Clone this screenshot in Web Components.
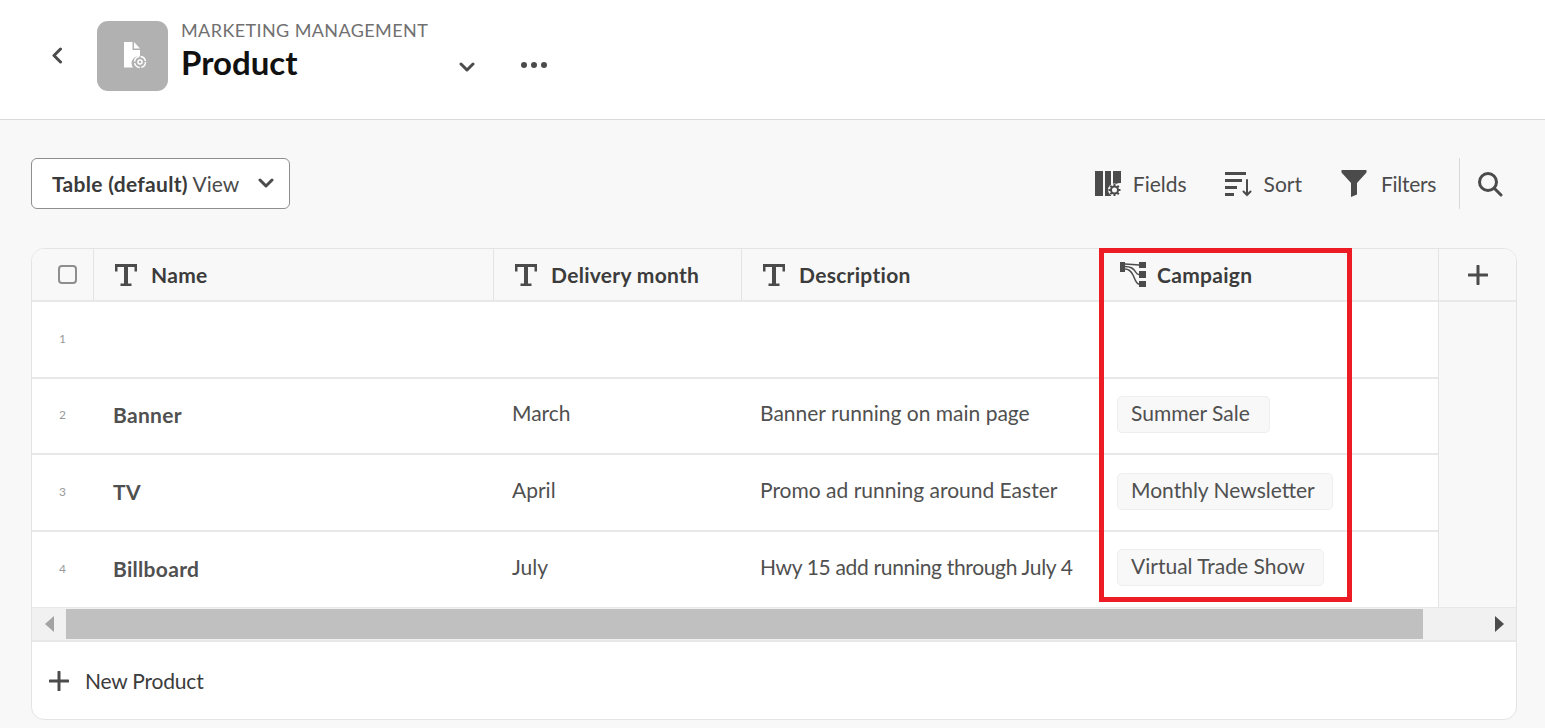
<!DOCTYPE html>
<html>
<head>
<meta charset="utf-8">
<style>
    html, body { margin: 0; height: 728px; overflow: hidden; }
    body { background: #f8f8f8; font-family: Lato, "Open Sans", sans-serif; color: #4b4b4b; }
</style>
</head>
<body>
<app-header></app-header>
<view-toolbar></view-toolbar>
<data-table>
    <table-row num="1"></table-row>
    <table-row num="2" name="Banner" month="March" desc="Banner running on main page" tag="Summer Sale" tag-width="153"></table-row>
    <table-row num="3" name="TV" month="April" desc="Promo ad running around Easter" tag="Monthly Newsletter" tag-width="216"></table-row>
    <table-row num="4" name="Billboard" month="July" desc="Hwy 15 add running through July 4" desc-spacing="-.33px" tag="Virtual Trade Show" tag-width="207"></table-row>
</data-table>

<script>
const ICONS = {
    chevron: `<svg width="16" height="11" viewBox="0 0 16 11"><path d="M2 2l6 6 6-6" fill="none" stroke="currentColor" stroke-width="3" stroke-linecap="round" stroke-linejoin="round"/></svg>`,
    type: `<svg width="24" height="24" viewBox="0 0 24 24" fill="#4b4b4b"><path d="M1 1h22v7.500h-2.500V4h-6.500v16.500h3.500V23H6.500v-2.500H10V4H3.500v4.500H1z"/></svg>`,
    plus: `<svg width="20" height="20" viewBox="0 0 20 20"><path d="M10 1v18M1 10h18" stroke="#4b4b4b" stroke-width="3" stroke-linecap="round"/></svg>`
}

const headerTemplate = document.createElement("template")
headerTemplate.innerHTML = `
    <style>
        :host { display: flex; height: 119px; background: #fff; border-bottom: 1px solid #d9d9d9; align-items: flex-start; box-sizing: content-box; color: #4b4b4b; }
        .back { margin: 47px 0 0 51px; width: 12px; height: 17px; }
        .tile { margin: 21px 0 0 34px; width: 71px; height: 70px; border-radius: 11px; background: #b1b1b1; display: flex; align-items: center; justify-content: center; }
        .titles { margin: 18px 0 0 13px; width: 278px; }
        .eyebrow { font-size: 18px; line-height: 24px; color: #707070; white-space: nowrap; letter-spacing: .4px; }
        .title { font-size: 33px; line-height: 42px; font-weight: 700; color: #111; margin-top: -1px; }
        .chevron { margin: 57px 0 0 0; height: 12px; }
        .more { margin: 62px 0 0 46px; display: flex; gap: 4px; }
        .more i { width: 6px; height: 6px; border-radius: 50%; background: #4b4b4b; }
    </style>
    <svg class="back" viewBox="0 0 12 17"><path d="M9.500 2L3 8.500 9.500 15" fill="none" stroke="currentColor" stroke-width="3" stroke-linecap="round" stroke-linejoin="round"/></svg>
    <div class="tile">
        <svg width="24" height="28" viewBox="0 0 24 28" style="margin: 0 0 2px 4px">
            <path d="M1 1h8.500v8H17v6.500a7 7 0 0 0-7 11H1z M11 1l6 6.500h-6z" fill="#fff"/>
            <circle cx="17" cy="21" r="5.500" fill="none" stroke="#fff" stroke-width="1.500" stroke-dasharray="7 1.600"/>
            <circle cx="17" cy="21" r="2" fill="none" stroke="#fff" stroke-width="1.500"/>
        </svg>
    </div>
    <div class="titles">
        <div class="eyebrow">MARKETING MANAGEMENT</div>
        <div class="title">Product</div>
    </div>
    <div class="chevron">${ICONS.chevron}</div>
    <div class="more"><i></i><i></i><i></i></div>
`

class AppHeader extends HTMLElement {
    constructor() {
        super()
        this.attachShadow({ mode: "open" }).append(headerTemplate.content.cloneNode(true))
    }
}
customElements.define("app-header", AppHeader)

const toolbarTemplate = document.createElement("template")
toolbarTemplate.innerHTML = `
    <style>
        :host { display: flex; align-items: flex-start; height: 128px; padding: 38px 0 0 31px; box-sizing: border-box; font-size: 21px; color: #4b4b4b; }
        .select { width: 259px; height: 51px; box-sizing: border-box; background: #fff; border: 1px solid #8e8e8e; border-radius: 6px; display: flex; align-items: center; padding: 0 15px 0 20px; justify-content: space-between; }
        .select b { font-weight: 700; color: #3a3a3a; letter-spacing: .3px; }
        .select span { white-space: nowrap; }
        .actions { margin-left: auto; display: flex; align-items: center; height: 51px; }
        .action { display: flex; align-items: center; gap: 11px; }
        .fields { margin-right: 38px; }
        .sort { margin-right: 39px; gap: 12px; }
        .filters { margin-right: 23px; gap: 14px; letter-spacing: -.3px; }
        .divider { width: 1px; height: 51px; background: #d9d9d9; }
        .search { margin: 0 42px 0 17px; height: 26px; }
    </style>
    <div class="select"><span><b>Table (default)</b> View</span>${ICONS.chevron}</div>
    <div class="actions">
        <div class="action fields">
            <svg width="27" height="27" viewBox="0 0 27 27" fill="#4b4b4b">
                <path d="M0 1h8v25H0zM10 1h6v25h-6zM18 1h8v12a8 8 0 0 0-8 5z"/>
                <circle cx="19.500" cy="20" r="6.500" fill="#f8f8f8"/>
                <circle cx="19.500" cy="20" r="3.500" fill="none" stroke="#4b4b4b" stroke-width="2"/>
                <path d="M19.500 14v2.500M19.500 23.500V26M13.500 20H16M23 20h2.500M15.300 15.800l1.800 1.800M22 22.500l1.800 1.800M15.300 24.200l1.800-1.800M22 17.500l1.800-1.800" stroke="#4b4b4b" stroke-width="2"/>
            </svg>
            <span>Fields</span>
        </div>
        <div class="action sort">
            <svg width="27" height="26" viewBox="0 0 27 26" fill="#4b4b4b">
                <path d="M0 1h21v3H0zM0 8h17v3H0zM0 15h12v3H0zM0 22h9v3H0z"/>
                <path d="M22 9v15M18.500 20.500L22 24l3.500-3.500" fill="none" stroke="#4b4b4b" stroke-width="2" stroke-linecap="round"/>
            </svg>
            <span>Sort</span>
        </div>
        <div class="action filters">
            <svg width="26" height="27" viewBox="0 0 26 27" fill="#4b4b4b"><path d="M0.500 0h25v2.500L16 13v11.500L10 27V13L0.500 2.500z"/></svg>
            <span>Filters</span>
        </div>
        <div class="divider"></div>
        <svg class="search" width="26" height="26" viewBox="0 0 26 26"><circle cx="11" cy="11" r="8.500" fill="none" stroke="#4b4b4b" stroke-width="3"/><path d="M17.500 17.500l6.500 6.500" stroke="#4b4b4b" stroke-width="3" stroke-linecap="round"/></svg>
    </div>
`

class ViewToolbar extends HTMLElement {
    constructor() {
        super()
        this.attachShadow({ mode: "open" }).append(toolbarTemplate.content.cloneNode(true))
    }
}
customElements.define("view-toolbar", ViewToolbar)

const rowTemplate = document.createElement("template")
rowTemplate.innerHTML = `
    <style>
        :host { display: grid; grid-template-columns: 62px 400px 248px 362px 335px; height: 76.67px; box-sizing: border-box; border-bottom: 2px solid #e8e8e8; font-size: 21px; color: #505050; background: #fff; }
        :host(:last-child) { border-bottom-color: transparent; }
        div { display: flex; align-items: center; min-width: 0; white-space: nowrap; padding-bottom: 6px; }
        .num { justify-content: center; font-size: 12px; color: #9a9a9a; padding: 0 1px 2px 0; }
        .name { padding-left: 19px; font-weight: 700; letter-spacing: .3px; padding-bottom: 2px; }
        .cell { padding-left: 18px; }
        .camp { padding-left: 13px; padding-bottom: 3px; }
        .tag { box-sizing: border-box; height: 37px; background: #f8f8f8; border: 1px solid #eee; border-radius: 5px; padding: 0 0 4px 13px; }
    </style>
    <div class="num"></div>
    <div class="name"></div>
    <div class="cell month"></div>
    <div class="cell desc"></div>
    <div class="camp"></div>
`

class TableRow extends HTMLElement {
    constructor() {
        super()
        this.attachShadow({ mode: "open" }).append(rowTemplate.content.cloneNode(true))
    }

    connectedCallback() {
        const shadow = this.shadowRoot
        shadow.querySelector(".num").textContent = this.getAttribute("num")
        shadow.querySelector(".name").textContent = this.getAttribute("name") || ""
        shadow.querySelector(".month").textContent = this.getAttribute("month") || ""
        const desc = shadow.querySelector(".desc")
        desc.textContent = this.getAttribute("desc") || ""
        if (this.hasAttribute("desc-spacing")) {
            desc.style.letterSpacing = this.getAttribute("desc-spacing")
        }
        if (this.hasAttribute("tag")) {
            const tag = document.createElement("div")
            tag.className = "tag"
            tag.style.width = this.getAttribute("tag-width") + "px"
            tag.textContent = this.getAttribute("tag")
            shadow.querySelector(".camp").append(tag)
        }
    }
}
customElements.define("table-row", TableRow)

const tableTemplate = document.createElement("template")
tableTemplate.innerHTML = `
    <style>
        :host { display: block; position: relative; margin-left: 31px; width: 1486px; height: 472px; box-sizing: border-box; border: 1px solid #e4e4e4; border-radius: 13px; background: #fff; color: #3c3c3c; }
        .frame { height: 100%; border-radius: 12px; overflow: hidden; display: flex; flex-direction: column; }
        .head { display: grid; grid-template-columns: 62px 400px 248px 362px 335px 1fr; height: 53px; flex: none; background: #f8f8f8; border-bottom: 2px solid #e8e8e8; box-sizing: border-box; font-size: 21px; font-weight: 700; letter-spacing: .3px; }
        .head > div { display: flex; align-items: center; gap: 13px; padding-left: 20px; border-right: 1px solid #e4e4e4; white-space: nowrap; }
        .head > div:first-child { justify-content: center; padding-left: 9px; }
        .head > div:last-child { border-right: 0; justify-content: center; padding-left: 0; }
        .head .camp { padding-left: 16px; gap: 10px; }
        .check { width: 15px; height: 15px; border: 2px solid #8e8e8e; border-radius: 4px; background: #f8f8f8; }
        .body { display: grid; grid-template-columns: 1407px 1fr; flex: none; height: 305px; }
        .rows { min-width: 0; border-right: 1px solid #e4e4e4; }
        .gutter { background: #f8f8f8; }
        .scrollbar { flex: none; height: 35px; display: flex; align-items: stretch; background: #f1f1f1; border-top: 1px solid #e8e8e8; box-sizing: border-box; border-bottom: 2px solid #e8e8e8; }
        .scrollbar .btn { width: 34px; display: flex; align-items: center; justify-content: center; flex: none; padding-bottom: 1px; }
        .scrollbar .thumb { width: 1357px; background: #c0c0c0; flex: none; margin: 1px 0; }
        .scrollbar .track { flex: 1; }
        .footer { flex: 1; display: flex; align-items: center; padding-left: 17px; gap: 16px; font-size: 21px; letter-spacing: -.2px; color: #3c3c3c; }
        .mark { position: absolute; left: 1067px; top: -1px; width: 253px; height: 354px; box-sizing: border-box; border: 5px solid #ed1c24; pointer-events: none; }
    </style>
    <div class="frame">
        <div class="head">
            <div><span class="check"></span></div>
            <div>${ICONS.type}<span>Name</span></div>
            <div>${ICONS.type}<span>Delivery month</span></div>
            <div>${ICONS.type}<span>Description</span></div>
            <div class="camp">
                <svg width="27" height="27" viewBox="0 0 27 27" fill="#4b4b4b">
                    <path d="M0 1h5v10H0zM19 1h7v6h-7zM19 10h7v7h-7zM19 20h7v6h-7z"/>
                    <path d="M5 3c6 0 9 1 14 1M5 5.500c6 0 9 2 11 6 1 2 1.500 2 3 2M5 8c4 0 6 2 8 6 2 4 3 9 6 9" fill="none" stroke="#4b4b4b" stroke-width="1.500"/>
                </svg>
                <span>Campaign</span>
            </div>
            <div>${ICONS.plus}</div>
        </div>
        <div class="body">
            <div class="rows"><slot></slot></div>
            <div class="gutter"></div>
        </div>
        <div class="scrollbar">
            <div class="btn"><svg width="9" height="16" viewBox="0 0 9 16"><path d="M9 0v16L0 8z" fill="#a3a3a3"/></svg></div>
            <div class="thumb"></div>
            <div class="track"></div>
            <div class="btn"><svg width="9" height="16" viewBox="0 0 9 16"><path d="M0 0v16l9-8z" fill="#4b4b4b"/></svg></div>
        </div>
        <div class="footer">${ICONS.plus}<span>New Product</span></div>
    </div>
    <div class="mark"></div>
`

class DataTable extends HTMLElement {
    constructor() {
        super()
        this.attachShadow({ mode: "open" }).append(tableTemplate.content.cloneNode(true))
    }
}
customElements.define("data-table", DataTable)
</script>
</body>
</html>
